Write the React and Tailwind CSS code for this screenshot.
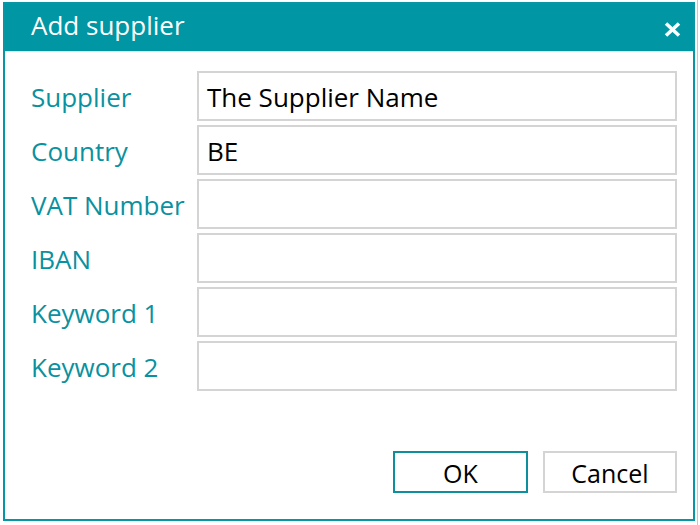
const fields = [
  { label: "Supplier", value: "The Supplier Name" },
  { label: "Country", value: "BE" },
  { label: "VAT Number", value: "" },
  { label: "IBAN", value: "" },
  { label: "Keyword 1", value: "" },
  { label: "Keyword 2", value: "" },
];

export default function App() {
  return (
    <div
      className="relative w-[700px] h-[525px] bg-white pl-[3px] pt-[2px] overflow-hidden"
      style={{ fontFamily: '"Open Sans", "Noto Sans", sans-serif' }}
    >
      <div className="absolute right-[2px] top-0 h-full w-px bg-[#c8c8c8]" />
      <div className="w-[692px] h-[519px] border-2 border-[#0896a4] bg-white flex flex-col">
        <div className="h-[47px] bg-[#0096a4] flex items-center justify-between pl-[26px] pr-[12px] shrink-0">
          <span className="text-white text-[26px] leading-none -mt-[5px]">Add supplier</span>
          <svg width="17" height="15" viewBox="0 0 17 15" className="mt-[4px]">
            <path d="M2 1.5 L15 13.5 M15 1.5 L2 13.5" stroke="white" strokeWidth="3.6" strokeLinecap="butt" />
          </svg>
        </div>
        <div className="h-px bg-[#d8ecee]" />
        <div className="flex flex-col gap-[4px] pt-[19px] pl-[26px] pr-[16px]">
          {fields.map((f) => (
            <div key={f.label} className="flex items-center h-[50px]">
              <div className="w-[166px] text-[26px] text-[#0a919f] leading-none pt-[2px]">
                {f.label}
              </div>
              <div className="flex-1 h-full border-2 border-[#d4d4d4] flex items-center pl-[8px] pt-[2px] text-[26px] text-black leading-none">
                {f.value}
              </div>
            </div>
          ))}
        </div>
        <div className="flex justify-end gap-[15px] pr-[16px] mt-[60px]">
          <button className="w-[135px] h-[42px] border-2 border-[#0e8f9c] bg-white text-[25px] text-black leading-none pt-[3px]">
            OK
          </button>
          <button className="w-[134px] h-[42px] border-2 border-[#d4d4d4] bg-white text-[25px] text-black leading-none pt-[3px]">
            Cancel
          </button>
        </div>
      </div>
    </div>
  );
}
